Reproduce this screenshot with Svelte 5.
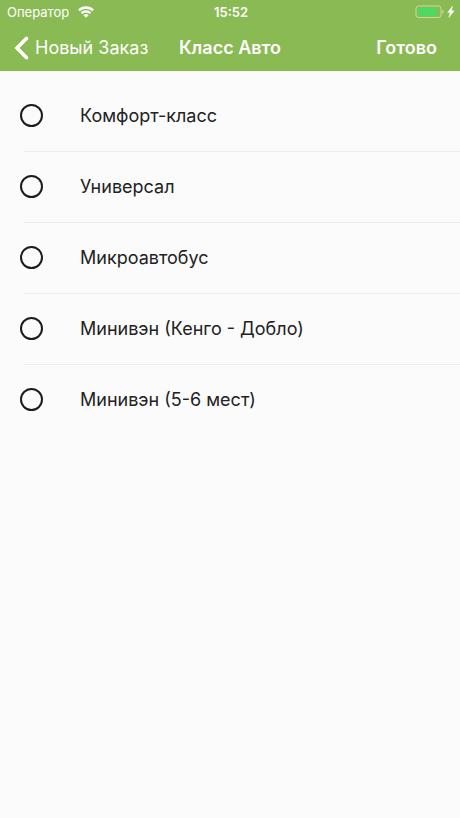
<script>
  const classes = [
    'Комфорт-класс',
    'Универсал',
    'Микроавтобус',
    'Минивэн (Кенго - Добло)',
    'Минивэн (5-6 мест)'
  ];
  let selected = $state('');
</script>

<div class="screen">
  <header>
    <div class="status">
      <div class="carrier">
        <span>Оператор</span>
        <svg width="16" height="12" viewBox="0 0 16 12" aria-hidden="true">
          <g fill="none" stroke="#fff" stroke-width="2.3">
            <path d="M.9 4.4a10.2 10.2 0 0 1 14.2 0" />
            <path d="M3.5 7.3a6.4 6.4 0 0 1 9 0" />
          </g>
          <path d="M8 11.8 5.4 9.2a3.7 3.7 0 0 1 5.2 0z" fill="#fff" />
        </svg>
      </div>
      <time>15:52</time>
      <div class="power">
        <svg width="40" height="14" viewBox="0 0 40 14" aria-hidden="true">
          <rect x="1" y="1" width="25" height="11.5" rx="2.5" fill="none" stroke="#c5de9f" />
          <rect x="3" y="2.8" width="18.5" height="8" rx="1" fill="#4cd964" />
          <path d="M27.5 4.8a2.2 2.2 0 0 1 0 4z" fill="#c5de9f" />
          <path d="M37.6 1 32.6 7.6H35.2L33.8 12.6 39.2 5.8H36.4z" fill="#fff" stroke="#fff" stroke-width=".4" />
        </svg>
      </div>
    </div>
    <nav>
      <button class="back" type="button">
        <svg width="15" height="24" viewBox="0 0 15 24" aria-hidden="true">
          <path d="M12.4 2.4 3 12l9.4 9.6" fill="none" stroke="#fff" stroke-width="3.6" stroke-linecap="round" stroke-linejoin="miter" />
        </svg>
        <span>Новый Заказ</span>
      </button>
      <h1>Класс Авто</h1>
      <button class="done" type="button">Готово</button>
    </nav>
  </header>

  <main>
    {#each classes as name}
      <label>
        <input type="radio" name="car-class" value={name} bind:group={selected} />
        <span>{name}</span>
      </label>
    {/each}
  </main>
</div>

<style>
  :global(body) {
    background: #fbfbfb;
  }
  .screen {
    min-height: 100vh;
    background: #fbfbfb;
    color: #222;
    font-family: Inter, 'Liberation Sans', sans-serif;
  }
  header {
    background: #8aba53;
    color: #fff;
  }
  .status,
  nav {
    display: grid;
    grid-template-columns: 1fr auto 1fr;
    align-items: center;
  }
  .status {
    height: 24px;
    padding: 0 5px 0 7px;
    font-size: 13px;
    line-height: 24px;
  }
  .carrier {
    display: flex;
    align-items: center;
    gap: 9px;
  }
  time {
    font-weight: 600;
  }
  .power {
    display: flex;
    justify-content: flex-end;
  }
  nav {
    height: 47px;
    padding: 0 14px;
  }
  button {
    border: 0;
    padding: 0;
    background: none;
    color: inherit;
    font: inherit;
    font-size: 18px;
    line-height: 24px;
    white-space: nowrap;
    cursor: pointer;
  }
  .back {
    display: flex;
    align-items: center;
    justify-self: start;
    gap: 6px;
  }
  h1 {
    margin: 0;
    font-size: 18px;
    line-height: 24px;
    font-weight: 600;
    white-space: nowrap;
  }
  .done {
    justify-self: end;
    padding-right: 9px;
    font-weight: 600;
  }
  main {
    padding-top: 9px;
  }
  label {
    position: relative;
    display: flex;
    align-items: center;
    gap: 37px;
    height: 71px;
    padding-left: 20px;
    font-size: 18px;
    line-height: 24px;
    cursor: pointer;
  }
  label + label::before {
    content: '';
    position: absolute;
    top: 0;
    left: 24px;
    right: 0;
    height: 1px;
    background: #eeeeee;
  }
  input {
    appearance: none;
    flex: none;
    width: 23px;
    height: 23px;
    margin: 0;
    border: 2px solid #1c1c1c;
    border-radius: 50%;
  }
  input:checked {
    background: radial-gradient(#8aba53 50%, transparent 55%);
  }
</style>
